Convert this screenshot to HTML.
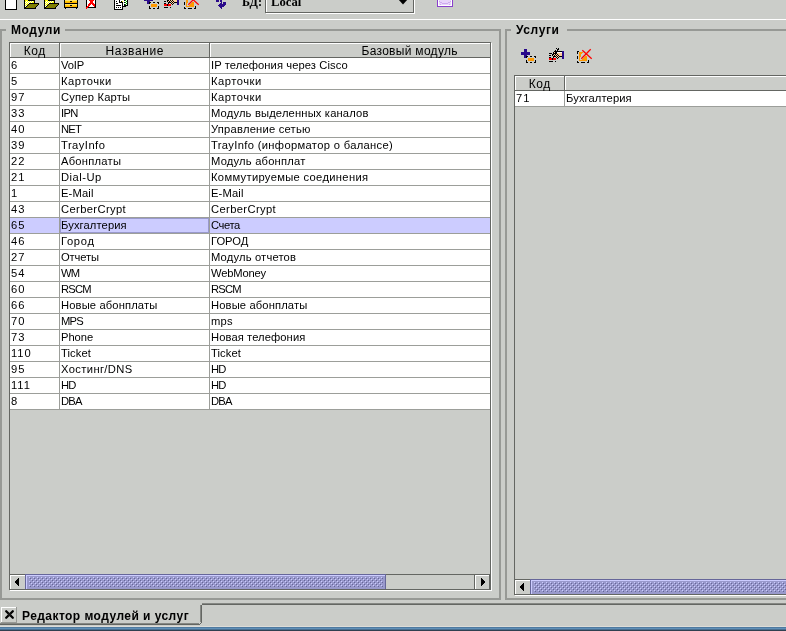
<!DOCTYPE html>
<html><head><meta charset="utf-8"><style>
html,body{margin:0;padding:0}
body{width:786px;height:631px;overflow:hidden;position:relative;background:#cbcdc9;font-family:"Liberation Sans",sans-serif;color:#000}
i{position:absolute;display:block}
b{position:absolute;white-space:nowrap;line-height:20px;font-weight:normal;will-change:transform}
svg{overflow:visible}
</style></head><body>
<i style="left:0px;top:19px;width:786px;height:1px;background:#ffffff"></i>
<svg style="position:absolute;left:0;top:0" width="786" height="19" shape-rendering="crispEdges"><rect x="5" y="-4" width="12" height="14" fill="#000"/><rect x="6" y="-4" width="10" height="13" fill="#fff"/><rect x="24" y="0" width="1" height="1" fill="#000000"/><rect x="25" y="0" width="3" height="1" fill="#ffff00"/><rect x="28" y="0" width="7" height="1" fill="#000000"/><rect x="24" y="1" width="1" height="1" fill="#000000"/><rect x="25" y="1" width="1" height="1" fill="#ffff00"/><rect x="26" y="1" width="1" height="1" fill="#ffffff"/><rect x="27" y="1" width="1" height="1" fill="#ffff00"/><rect x="28" y="1" width="1" height="1" fill="#ffffff"/><rect x="29" y="1" width="1" height="1" fill="#ffff00"/><rect x="30" y="1" width="1" height="1" fill="#ffffff"/><rect x="31" y="1" width="1" height="1" fill="#ffff00"/><rect x="32" y="1" width="1" height="1" fill="#ffffff"/><rect x="33" y="1" width="1" height="1" fill="#ffff00"/><rect x="34" y="1" width="1" height="1" fill="#000000"/><rect x="24" y="2" width="1" height="1" fill="#000000"/><rect x="25" y="2" width="1" height="1" fill="#ffffff"/><rect x="26" y="2" width="1" height="1" fill="#ffff00"/><rect x="27" y="2" width="1" height="1" fill="#ffffff"/><rect x="28" y="2" width="1" height="1" fill="#ffff00"/><rect x="29" y="2" width="1" height="1" fill="#ffffff"/><rect x="30" y="2" width="1" height="1" fill="#ffff00"/><rect x="31" y="2" width="1" height="1" fill="#ffffff"/><rect x="32" y="2" width="2" height="1" fill="#ffff00"/><rect x="34" y="2" width="1" height="1" fill="#000000"/><rect x="24" y="3" width="1" height="1" fill="#000000"/><rect x="25" y="3" width="1" height="1" fill="#ffff00"/><rect x="26" y="3" width="1" height="1" fill="#ffffff"/><rect x="27" y="3" width="1" height="1" fill="#ffff00"/><rect x="28" y="3" width="1" height="1" fill="#ffffff"/><rect x="29" y="3" width="10" height="1" fill="#000000"/><rect x="24" y="4" width="1" height="1" fill="#000000"/><rect x="25" y="4" width="1" height="1" fill="#ffffff"/><rect x="26" y="4" width="2" height="1" fill="#ffff00"/><rect x="28" y="4" width="1" height="1" fill="#000000"/><rect x="29" y="4" width="9" height="1" fill="#808000"/><rect x="38" y="4" width="1" height="1" fill="#000000"/><rect x="24" y="5" width="1" height="1" fill="#000000"/><rect x="25" y="5" width="1" height="1" fill="#ffff00"/><rect x="26" y="5" width="1" height="1" fill="#ffffff"/><rect x="27" y="5" width="1" height="1" fill="#000000"/><rect x="28" y="5" width="9" height="1" fill="#808000"/><rect x="37" y="5" width="1" height="1" fill="#000000"/><rect x="24" y="6" width="1" height="1" fill="#000000"/><rect x="25" y="6" width="1" height="1" fill="#ffffff"/><rect x="26" y="6" width="1" height="1" fill="#000000"/><rect x="27" y="6" width="9" height="1" fill="#808000"/><rect x="36" y="6" width="1" height="1" fill="#000000"/><rect x="24" y="7" width="2" height="1" fill="#000000"/><rect x="26" y="7" width="9" height="1" fill="#808000"/><rect x="35" y="7" width="1" height="1" fill="#000000"/><rect x="24" y="8" width="12" height="1" fill="#000000"/><rect x="44" y="0" width="1" height="1" fill="#000000"/><rect x="45" y="0" width="3" height="1" fill="#ffff00"/><rect x="48" y="0" width="7" height="1" fill="#000000"/><rect x="44" y="1" width="1" height="1" fill="#000000"/><rect x="45" y="1" width="1" height="1" fill="#ffff00"/><rect x="46" y="1" width="1" height="1" fill="#ffffff"/><rect x="47" y="1" width="1" height="1" fill="#ffff00"/><rect x="48" y="1" width="1" height="1" fill="#ffffff"/><rect x="49" y="1" width="1" height="1" fill="#ffff00"/><rect x="50" y="1" width="1" height="1" fill="#ffffff"/><rect x="51" y="1" width="1" height="1" fill="#ffff00"/><rect x="52" y="1" width="1" height="1" fill="#ffffff"/><rect x="53" y="1" width="1" height="1" fill="#ffff00"/><rect x="54" y="1" width="1" height="1" fill="#000000"/><rect x="44" y="2" width="1" height="1" fill="#000000"/><rect x="45" y="2" width="1" height="1" fill="#ffffff"/><rect x="46" y="2" width="1" height="1" fill="#ffff00"/><rect x="47" y="2" width="1" height="1" fill="#ffffff"/><rect x="48" y="2" width="1" height="1" fill="#ffff00"/><rect x="49" y="2" width="1" height="1" fill="#ffffff"/><rect x="50" y="2" width="1" height="1" fill="#ffff00"/><rect x="51" y="2" width="1" height="1" fill="#ffffff"/><rect x="52" y="2" width="2" height="1" fill="#ffff00"/><rect x="54" y="2" width="1" height="1" fill="#000000"/><rect x="44" y="3" width="1" height="1" fill="#000000"/><rect x="45" y="3" width="1" height="1" fill="#ffff00"/><rect x="46" y="3" width="1" height="1" fill="#ffffff"/><rect x="47" y="3" width="1" height="1" fill="#ffff00"/><rect x="48" y="3" width="1" height="1" fill="#ffffff"/><rect x="49" y="3" width="10" height="1" fill="#000000"/><rect x="44" y="4" width="1" height="1" fill="#000000"/><rect x="45" y="4" width="1" height="1" fill="#ffffff"/><rect x="46" y="4" width="2" height="1" fill="#ffff00"/><rect x="48" y="4" width="1" height="1" fill="#000000"/><rect x="49" y="4" width="9" height="1" fill="#808000"/><rect x="58" y="4" width="1" height="1" fill="#000000"/><rect x="44" y="5" width="1" height="1" fill="#000000"/><rect x="45" y="5" width="1" height="1" fill="#ffff00"/><rect x="46" y="5" width="1" height="1" fill="#ffffff"/><rect x="47" y="5" width="1" height="1" fill="#000000"/><rect x="48" y="5" width="9" height="1" fill="#808000"/><rect x="57" y="5" width="1" height="1" fill="#000000"/><rect x="44" y="6" width="1" height="1" fill="#000000"/><rect x="45" y="6" width="1" height="1" fill="#ffffff"/><rect x="46" y="6" width="1" height="1" fill="#000000"/><rect x="47" y="6" width="9" height="1" fill="#808000"/><rect x="56" y="6" width="1" height="1" fill="#000000"/><rect x="44" y="7" width="2" height="1" fill="#000000"/><rect x="46" y="7" width="9" height="1" fill="#808000"/><rect x="55" y="7" width="1" height="1" fill="#000000"/><rect x="44" y="8" width="12" height="1" fill="#000000"/><rect x="64" y="0" width="1" height="1" fill="#000000"/><rect x="65" y="0" width="12" height="1" fill="#ffe066"/><rect x="77" y="0" width="1" height="1" fill="#000000"/><rect x="64" y="1" width="1" height="1" fill="#000000"/><rect x="65" y="1" width="5" height="1" fill="#ffcc00"/><rect x="70" y="1" width="2" height="1" fill="#000000"/><rect x="72" y="1" width="5" height="1" fill="#ffcc00"/><rect x="77" y="1" width="1" height="1" fill="#000000"/><rect x="64" y="2" width="1" height="1" fill="#000000"/><rect x="65" y="2" width="12" height="1" fill="#ffb000"/><rect x="77" y="2" width="1" height="1" fill="#000000"/><rect x="64" y="3" width="14" height="1" fill="#000000"/><rect x="64" y="4" width="1" height="1" fill="#000000"/><rect x="65" y="4" width="12" height="1" fill="#ffe066"/><rect x="77" y="4" width="1" height="1" fill="#000000"/><rect x="64" y="5" width="1" height="1" fill="#000000"/><rect x="65" y="5" width="5" height="1" fill="#ffcc00"/><rect x="70" y="5" width="2" height="1" fill="#000000"/><rect x="72" y="5" width="5" height="1" fill="#ffcc00"/><rect x="77" y="5" width="1" height="1" fill="#000000"/><rect x="64" y="6" width="1" height="1" fill="#000000"/><rect x="65" y="6" width="12" height="1" fill="#ffb000"/><rect x="77" y="6" width="1" height="1" fill="#000000"/><rect x="64" y="7" width="14" height="1" fill="#000000"/><rect x="65" y="8" width="1" height="1" fill="#000000"/><rect x="76" y="8" width="1" height="1" fill="#000000"/><rect x="86" y="0" width="1" height="1" fill="#000000"/><rect x="87" y="0" width="2" height="1" fill="#ffffff"/><rect x="89" y="0" width="5" height="1" fill="#ff0000"/><rect x="94" y="0" width="1" height="1" fill="#ffffff"/><rect x="95" y="0" width="1" height="1" fill="#000000"/><rect x="86" y="1" width="1" height="1" fill="#000000"/><rect x="87" y="1" width="3" height="1" fill="#ffffff"/><rect x="90" y="1" width="3" height="1" fill="#ff0000"/><rect x="93" y="1" width="2" height="1" fill="#ffffff"/><rect x="95" y="1" width="1" height="1" fill="#000000"/><rect x="86" y="2" width="1" height="1" fill="#000000"/><rect x="87" y="2" width="3" height="1" fill="#ffffff"/><rect x="90" y="2" width="3" height="1" fill="#ff0000"/><rect x="93" y="2" width="2" height="1" fill="#ffffff"/><rect x="95" y="2" width="1" height="1" fill="#000000"/><rect x="86" y="3" width="1" height="1" fill="#000000"/><rect x="87" y="3" width="2" height="1" fill="#ffffff"/><rect x="89" y="3" width="5" height="1" fill="#ff0000"/><rect x="94" y="3" width="1" height="1" fill="#ffffff"/><rect x="95" y="3" width="1" height="1" fill="#000000"/><rect x="86" y="4" width="1" height="1" fill="#000000"/><rect x="87" y="4" width="1" height="1" fill="#ffffff"/><rect x="88" y="4" width="3" height="1" fill="#ff0000"/><rect x="91" y="4" width="1" height="1" fill="#ffffff"/><rect x="92" y="4" width="3" height="1" fill="#ff0000"/><rect x="95" y="4" width="1" height="1" fill="#000000"/><rect x="86" y="5" width="1" height="1" fill="#000000"/><rect x="87" y="5" width="1" height="1" fill="#ffffff"/><rect x="88" y="5" width="2" height="1" fill="#ff0000"/><rect x="90" y="5" width="3" height="1" fill="#ffffff"/><rect x="93" y="5" width="2" height="1" fill="#ff0000"/><rect x="95" y="5" width="1" height="1" fill="#000000"/><rect x="86" y="6" width="1" height="1" fill="#000000"/><rect x="87" y="6" width="2" height="1" fill="#ff0000"/><rect x="89" y="6" width="5" height="1" fill="#ffffff"/><rect x="94" y="6" width="1" height="1" fill="#ff0000"/><rect x="95" y="6" width="1" height="1" fill="#000000"/><rect x="86" y="7" width="2" height="1" fill="#ff0000"/><rect x="88" y="7" width="8" height="1" fill="#000000"/><rect x="86" y="8" width="1" height="1" fill="#ff0000"/><rect x="114" y="0" width="1" height="1" fill="#000000"/><rect x="115" y="0" width="4" height="1" fill="#ffffff"/><rect x="119" y="0" width="1" height="1" fill="#000000"/><rect x="120" y="0" width="4" height="1" fill="#ffffff"/><rect x="124" y="0" width="1" height="1" fill="#000000"/><rect x="125" y="0" width="1" height="1" fill="#00a000"/><rect x="126" y="0" width="1" height="1" fill="#ffffff"/><rect x="127" y="0" width="1" height="1" fill="#000000"/><rect x="114" y="1" width="1" height="1" fill="#000000"/><rect x="115" y="1" width="1" height="1" fill="#ffffff"/><rect x="116" y="1" width="1" height="1" fill="#000000"/><rect x="117" y="1" width="2" height="1" fill="#ffffff"/><rect x="119" y="1" width="1" height="1" fill="#000000"/><rect x="120" y="1" width="1" height="1" fill="#ffffff"/><rect x="121" y="1" width="1" height="1" fill="#000000"/><rect x="122" y="1" width="1" height="1" fill="#ffff00"/><rect x="123" y="1" width="3" height="1" fill="#ffffff"/><rect x="126" y="1" width="1" height="1" fill="#00a000"/><rect x="127" y="1" width="1" height="1" fill="#000000"/><rect x="114" y="2" width="1" height="1" fill="#000000"/><rect x="115" y="2" width="4" height="1" fill="#ffffff"/><rect x="119" y="2" width="4" height="1" fill="#000000"/><rect x="123" y="2" width="1" height="1" fill="#ffffff"/><rect x="124" y="2" width="1" height="1" fill="#000000"/><rect x="125" y="2" width="1" height="1" fill="#00a000"/><rect x="126" y="2" width="1" height="1" fill="#ffffff"/><rect x="127" y="2" width="1" height="1" fill="#000000"/><rect x="114" y="3" width="1" height="1" fill="#000000"/><rect x="115" y="3" width="1" height="1" fill="#ffffff"/><rect x="116" y="3" width="2" height="1" fill="#000000"/><rect x="118" y="3" width="4" height="1" fill="#ffffff"/><rect x="122" y="3" width="1" height="1" fill="#000000"/><rect x="123" y="3" width="3" height="1" fill="#ffffff"/><rect x="126" y="3" width="1" height="1" fill="#00a000"/><rect x="127" y="3" width="1" height="1" fill="#000000"/><rect x="114" y="4" width="1" height="1" fill="#000000"/><rect x="115" y="4" width="7" height="1" fill="#ffffff"/><rect x="122" y="4" width="1" height="1" fill="#000000"/><rect x="123" y="4" width="1" height="1" fill="#ffffff"/><rect x="124" y="4" width="1" height="1" fill="#000000"/><rect x="125" y="4" width="1" height="1" fill="#00a000"/><rect x="126" y="4" width="1" height="1" fill="#ffffff"/><rect x="127" y="4" width="1" height="1" fill="#000000"/><rect x="114" y="5" width="1" height="1" fill="#000000"/><rect x="115" y="5" width="1" height="1" fill="#ffffff"/><rect x="116" y="5" width="5" height="1" fill="#000000"/><rect x="121" y="5" width="1" height="1" fill="#ffffff"/><rect x="122" y="5" width="1" height="1" fill="#000000"/><rect x="123" y="5" width="1" height="1" fill="#ffffff"/><rect x="124" y="5" width="4" height="1" fill="#000000"/><rect x="114" y="6" width="1" height="1" fill="#000000"/><rect x="115" y="6" width="7" height="1" fill="#ffffff"/><rect x="122" y="6" width="4" height="1" fill="#000000"/><rect x="114" y="7" width="1" height="1" fill="#000000"/><rect x="115" y="7" width="1" height="1" fill="#ffffff"/><rect x="116" y="7" width="1" height="1" fill="#000000"/><rect x="117" y="7" width="1" height="1" fill="#ffffff"/><rect x="118" y="7" width="1" height="1" fill="#000000"/><rect x="119" y="7" width="1" height="1" fill="#ffffff"/><rect x="120" y="7" width="1" height="1" fill="#000000"/><rect x="121" y="7" width="1" height="1" fill="#ffffff"/><rect x="122" y="7" width="1" height="1" fill="#000000"/><rect x="114" y="8" width="1" height="1" fill="#000000"/><rect x="115" y="8" width="7" height="1" fill="#ffffff"/><rect x="122" y="8" width="1" height="1" fill="#000000"/><rect x="114" y="9" width="9" height="1" fill="#000000"/><use href="#ico-add" x="-377" y="-54"/><use href="#ico-edit" x="-385" y="-54"/><use href="#ico-del" x="-393" y="-54"/><rect x="216" y="0" width="3" height="1" fill="#2a0a8a"/><rect x="220" y="0" width="2" height="1" fill="#2a0a8a"/><rect x="216" y="1" width="3" height="1" fill="#2a0a8a"/><rect x="220" y="1" width="2" height="1" fill="#2a0a8a"/><rect x="221" y="2" width="1" height="1" fill="#2a0a8a"/><rect x="223" y="2" width="3" height="1" fill="#2a0a8a"/><rect x="220" y="3" width="2" height="1" fill="#2a0a8a"/><rect x="223" y="3" width="3" height="1" fill="#2a0a8a"/><rect x="219" y="4" width="7" height="1" fill="#2a0a8a"/><rect x="218" y="5" width="7" height="1" fill="#2a0a8a"/><rect x="219" y="6" width="5" height="1" fill="#2a0a8a"/><rect x="220" y="7" width="2" height="1" fill="#2a0a8a"/><rect x="221" y="8" width="1" height="1" fill="#2a0a8a"/><rect x="437" y="0" width="1" height="1" fill="#8a3fcc"/><rect x="438" y="0" width="1" height="1" fill="#ffffff"/><rect x="439" y="0" width="12" height="1" fill="#e8d4fa"/><rect x="451" y="0" width="1" height="1" fill="#ffffff"/><rect x="452" y="0" width="1" height="1" fill="#8a3fcc"/><rect x="437" y="1" width="1" height="1" fill="#8a3fcc"/><rect x="438" y="1" width="1" height="1" fill="#ffffff"/><rect x="439" y="1" width="1" height="1" fill="#cfa8f0"/><rect x="440" y="1" width="10" height="1" fill="#e8d4fa"/><rect x="450" y="1" width="1" height="1" fill="#cfa8f0"/><rect x="451" y="1" width="1" height="1" fill="#ffffff"/><rect x="452" y="1" width="1" height="1" fill="#8a3fcc"/><rect x="437" y="2" width="1" height="1" fill="#8a3fcc"/><rect x="438" y="2" width="1" height="1" fill="#ffffff"/><rect x="439" y="2" width="1" height="1" fill="#e8d4fa"/><rect x="440" y="2" width="2" height="1" fill="#cfa8f0"/><rect x="442" y="2" width="6" height="1" fill="#e8d4fa"/><rect x="448" y="2" width="2" height="1" fill="#cfa8f0"/><rect x="450" y="2" width="1" height="1" fill="#e8d4fa"/><rect x="451" y="2" width="1" height="1" fill="#ffffff"/><rect x="452" y="2" width="1" height="1" fill="#8a3fcc"/><rect x="437" y="3" width="1" height="1" fill="#8a3fcc"/><rect x="438" y="3" width="1" height="1" fill="#ffffff"/><rect x="439" y="3" width="3" height="1" fill="#e8d4fa"/><rect x="442" y="3" width="6" height="1" fill="#cfa8f0"/><rect x="448" y="3" width="3" height="1" fill="#e8d4fa"/><rect x="451" y="3" width="1" height="1" fill="#ffffff"/><rect x="452" y="3" width="1" height="1" fill="#8a3fcc"/><rect x="437" y="4" width="1" height="1" fill="#8a3fcc"/><rect x="438" y="4" width="1" height="1" fill="#ffffff"/><rect x="439" y="4" width="1" height="1" fill="#e8d4fa"/><rect x="440" y="4" width="1" height="1" fill="#cfa8f0"/><rect x="441" y="4" width="8" height="1" fill="#e8d4fa"/><rect x="449" y="4" width="1" height="1" fill="#cfa8f0"/><rect x="450" y="4" width="1" height="1" fill="#e8d4fa"/><rect x="451" y="4" width="1" height="1" fill="#ffffff"/><rect x="452" y="4" width="1" height="1" fill="#8a3fcc"/><rect x="437" y="5" width="1" height="1" fill="#8a3fcc"/><rect x="438" y="5" width="14" height="1" fill="#ffffff"/><rect x="452" y="5" width="1" height="1" fill="#8a3fcc"/><rect x="437" y="6" width="16" height="1" fill="#8a3fcc"/></svg>
<b style="left:242px;top:-8.23px;font-size:12.2px;font-weight:bold;font-family:'Liberation Serif',serif;">БД:</b>
<i style="left:265px;top:-2px;width:1px;height:15px;background:#646662"></i>
<i style="left:266px;top:-2px;width:1px;height:14px;background:#ffffff"></i>
<i style="left:265px;top:12px;width:149px;height:1px;background:#646662"></i>
<i style="left:413px;top:-2px;width:1px;height:15px;background:#646662"></i>
<i style="left:266px;top:13px;width:149px;height:1px;background:#ffffff"></i>
<i style="left:414px;top:-2px;width:1px;height:16px;background:#ffffff"></i>
<b style="left:271px;top:-8.40px;font-size:12.7px;font-weight:bold;font-family:'Liberation Serif',serif;">Local</b>
<svg style="position:absolute;left:396px;top:0" width="14" height="8"><polygon points="2,-1 12,-1 7,4.5" fill="#000"/></svg>
<i style="left:0px;top:29px;width:501px;height:2px;background:#979995"></i>
<i style="left:0px;top:29px;width:2px;height:571px;background:#979995"></i>
<i style="left:499px;top:29px;width:2px;height:571px;background:#979995"></i>
<i style="left:0px;top:598px;width:501px;height:2px;background:#979995"></i>
<i style="left:6px;top:24px;width:59px;height:12px;background:#cbcdc9"></i>
<b style="left:11px;top:19.84px;font-size:12px;font-weight:bold;letter-spacing:0.6px;">Модули</b>
<i style="left:505px;top:29px;width:281px;height:2px;background:#979995"></i>
<i style="left:505px;top:29px;width:2px;height:571px;background:#979995"></i>
<i style="left:505px;top:598px;width:281px;height:2px;background:#979995"></i>
<i style="left:511px;top:24px;width:56px;height:12px;background:#cbcdc9"></i>
<b style="left:516px;top:19.84px;font-size:12px;font-weight:bold;letter-spacing:0.6px;">Услуги</b>
<i style="left:9px;top:42px;width:482px;height:1px;background:#646662"></i>
<i style="left:9px;top:42px;width:1px;height:548px;background:#646662"></i>
<i style="left:490px;top:42px;width:1px;height:548px;background:#646662"></i>
<i style="left:9px;top:589px;width:482px;height:1px;background:#646662"></i>
<i style="left:491px;top:43px;width:1px;height:548px;background:#ffffff"></i>
<i style="left:10px;top:590px;width:482px;height:1px;background:#ffffff"></i>
<i style="left:10px;top:43px;width:480px;height:1px;background:#ffffff"></i>
<i style="left:10px;top:57px;width:480px;height:1px;background:#646662"></i>
<i style="left:10px;top:43px;width:1px;height:14px;background:#ffffff"></i>
<i style="left:59px;top:43px;width:1px;height:15px;background:#646662"></i>
<i style="left:60px;top:43px;width:1px;height:14px;background:#ffffff"></i>
<i style="left:209px;top:43px;width:1px;height:15px;background:#646662"></i>
<i style="left:210px;top:43px;width:1px;height:14px;background:#ffffff"></i>
<b style="left:10px;width:49px;text-align:center;top:40.84px;font-size:12px;font-weight:normal;letter-spacing:0.6px;text-indent:0.6px;">Код</b>
<b style="left:60px;width:149px;text-align:center;top:40.84px;font-size:12px;font-weight:normal;letter-spacing:0.6px;text-indent:0.6px;">Название</b>
<b style="left:210px;width:399px;text-align:center;top:40.84px;font-size:12px;font-weight:normal;letter-spacing:0.3px;text-indent:0.3px;">Базовый модуль</b>
<i style="left:10px;top:58px;width:480px;height:352px;background:#ffffff"></i>
<i style="left:10px;top:218px;width:480px;height:15px;background:#ccccff"></i>
<i style="left:60px;top:218px;width:149px;height:1px;background:#9999cc"></i>
<i style="left:60px;top:232px;width:149px;height:1px;background:#9999cc"></i>
<i style="left:60px;top:218px;width:1px;height:15px;background:#9999cc"></i>
<i style="left:208px;top:218px;width:1px;height:15px;background:#9999cc"></i>
<i style="left:10px;top:73px;width:480px;height:1px;background:#9c9e9a"></i>
<i style="left:10px;top:89px;width:480px;height:1px;background:#9c9e9a"></i>
<i style="left:10px;top:105px;width:480px;height:1px;background:#9c9e9a"></i>
<i style="left:10px;top:121px;width:480px;height:1px;background:#9c9e9a"></i>
<i style="left:10px;top:137px;width:480px;height:1px;background:#9c9e9a"></i>
<i style="left:10px;top:153px;width:480px;height:1px;background:#9c9e9a"></i>
<i style="left:10px;top:169px;width:480px;height:1px;background:#9c9e9a"></i>
<i style="left:10px;top:185px;width:480px;height:1px;background:#9c9e9a"></i>
<i style="left:10px;top:201px;width:480px;height:1px;background:#9c9e9a"></i>
<i style="left:10px;top:217px;width:480px;height:1px;background:#9c9e9a"></i>
<i style="left:10px;top:233px;width:480px;height:1px;background:#9c9e9a"></i>
<i style="left:10px;top:249px;width:480px;height:1px;background:#9c9e9a"></i>
<i style="left:10px;top:265px;width:480px;height:1px;background:#9c9e9a"></i>
<i style="left:10px;top:281px;width:480px;height:1px;background:#9c9e9a"></i>
<i style="left:10px;top:297px;width:480px;height:1px;background:#9c9e9a"></i>
<i style="left:10px;top:313px;width:480px;height:1px;background:#9c9e9a"></i>
<i style="left:10px;top:329px;width:480px;height:1px;background:#9c9e9a"></i>
<i style="left:10px;top:345px;width:480px;height:1px;background:#9c9e9a"></i>
<i style="left:10px;top:361px;width:480px;height:1px;background:#9c9e9a"></i>
<i style="left:10px;top:377px;width:480px;height:1px;background:#9c9e9a"></i>
<i style="left:10px;top:393px;width:480px;height:1px;background:#9c9e9a"></i>
<i style="left:10px;top:409px;width:480px;height:1px;background:#9c9e9a"></i>
<i style="left:59px;top:58px;width:1px;height:352px;background:#9c9e9a"></i>
<i style="left:209px;top:58px;width:1px;height:352px;background:#9c9e9a"></i>
<b style="left:11px;top:55.12px;font-size:11.2px;letter-spacing:0.95px;">6</b>
<b style="left:61px;top:55.12px;font-size:11.2px;letter-spacing:-0.12px;">VoIP</b>
<b style="left:211px;top:55.12px;font-size:11.2px;letter-spacing:0.09px;">IP телефония через Cisco</b>
<b style="left:11px;top:71.12px;font-size:11.2px;letter-spacing:0.95px;">5</b>
<b style="left:61px;top:71.12px;font-size:11.2px;letter-spacing:0.5px;">Карточки</b>
<b style="left:211px;top:71.12px;font-size:11.2px;letter-spacing:0.5px;">Карточки</b>
<b style="left:11px;top:87.12px;font-size:11.2px;letter-spacing:0.95px;">97</b>
<b style="left:61px;top:87.12px;font-size:11.2px;letter-spacing:0.2px;">Супер Карты</b>
<b style="left:211px;top:87.12px;font-size:11.2px;letter-spacing:0.5px;">Карточки</b>
<b style="left:11px;top:103.12px;font-size:11.2px;letter-spacing:0.95px;">33</b>
<b style="left:61px;top:103.12px;font-size:11.2px;letter-spacing:-0.64px;">IPN</b>
<b style="left:211px;top:103.12px;font-size:11.2px;letter-spacing:0.16px;">Модуль выделенных каналов</b>
<b style="left:11px;top:119.12px;font-size:11.2px;letter-spacing:0.95px;">40</b>
<b style="left:61px;top:119.12px;font-size:11.2px;letter-spacing:-0.8px;">NET</b>
<b style="left:211px;top:119.12px;font-size:11.2px;letter-spacing:0.22px;">Управление сетью</b>
<b style="left:11px;top:135.12px;font-size:11.2px;letter-spacing:0.95px;">39</b>
<b style="left:61px;top:135.12px;font-size:11.2px;letter-spacing:0.47px;">TrayInfo</b>
<b style="left:211px;top:135.12px;font-size:11.2px;letter-spacing:0.33px;">TrayInfo (информатор о балансе)</b>
<b style="left:11px;top:151.12px;font-size:11.2px;letter-spacing:0.95px;">22</b>
<b style="left:61px;top:151.12px;font-size:11.2px;letter-spacing:0.24px;">Абонплаты</b>
<b style="left:211px;top:151.12px;font-size:11.2px;letter-spacing:0.2px;">Модуль абонплат</b>
<b style="left:11px;top:167.12px;font-size:11.2px;letter-spacing:0.95px;">21</b>
<b style="left:61px;top:167.12px;font-size:11.2px;letter-spacing:0.49px;">Dial-Up</b>
<b style="left:211px;top:167.12px;font-size:11.2px;letter-spacing:0.32px;">Коммутируемые соединения</b>
<b style="left:11px;top:183.12px;font-size:11.2px;letter-spacing:0.95px;">1</b>
<b style="left:61px;top:183.12px;font-size:11.2px;letter-spacing:0.16px;">E-Mail</b>
<b style="left:211px;top:183.12px;font-size:11.2px;letter-spacing:0.16px;">E-Mail</b>
<b style="left:11px;top:199.12px;font-size:11.2px;letter-spacing:0.95px;">43</b>
<b style="left:61px;top:199.12px;font-size:11.2px;letter-spacing:0.38px;">CerberCrypt</b>
<b style="left:211px;top:199.12px;font-size:11.2px;letter-spacing:0.38px;">CerberCrypt</b>
<b style="left:11px;top:215.12px;font-size:11.2px;letter-spacing:0.95px;">65</b>
<b style="left:61px;top:215.12px;font-size:11.2px;letter-spacing:0.1px;">Бухгалтерия</b>
<b style="left:211px;top:215.12px;font-size:11.2px;letter-spacing:-0.41px;">Счета</b>
<b style="left:11px;top:231.12px;font-size:11.2px;letter-spacing:0.95px;">46</b>
<b style="left:61px;top:231.12px;font-size:11.2px;letter-spacing:0.67px;">Город</b>
<b style="left:211px;top:231.12px;font-size:11.2px;letter-spacing:-0.03px;">ГОРОД</b>
<b style="left:11px;top:247.12px;font-size:11.2px;letter-spacing:0.95px;">27</b>
<b style="left:61px;top:247.12px;font-size:11.2px;letter-spacing:-0.13px;">Отчеты</b>
<b style="left:211px;top:247.12px;font-size:11.2px;letter-spacing:0.17px;">Модуль отчетов</b>
<b style="left:11px;top:263.12px;font-size:11.2px;letter-spacing:0.95px;">54</b>
<b style="left:61px;top:263.12px;font-size:11.2px;letter-spacing:-0.8px;">WM</b>
<b style="left:211px;top:263.12px;font-size:11.2px;letter-spacing:-0.17px;">WebMoney</b>
<b style="left:11px;top:279.12px;font-size:11.2px;letter-spacing:0.95px;">60</b>
<b style="left:61px;top:279.12px;font-size:11.2px;letter-spacing:-0.8px;">RSCM</b>
<b style="left:211px;top:279.12px;font-size:11.2px;letter-spacing:-0.8px;">RSCM</b>
<b style="left:11px;top:295.12px;font-size:11.2px;letter-spacing:0.95px;">66</b>
<b style="left:61px;top:295.12px;font-size:11.2px;letter-spacing:0.13px;">Новые абонплаты</b>
<b style="left:211px;top:295.12px;font-size:11.2px;letter-spacing:0.13px;">Новые абонплаты</b>
<b style="left:11px;top:311.12px;font-size:11.2px;letter-spacing:0.95px;">70</b>
<b style="left:61px;top:311.12px;font-size:11.2px;letter-spacing:-0.8px;">MPS</b>
<b style="left:211px;top:311.12px;font-size:11.2px;letter-spacing:0.23px;">mps</b>
<b style="left:11px;top:327.12px;font-size:11.2px;letter-spacing:0.95px;">73</b>
<b style="left:61px;top:327.12px;font-size:11.2px;letter-spacing:-0.03px;">Phone</b>
<b style="left:211px;top:327.12px;font-size:11.2px;letter-spacing:0.09px;">Новая телефония</b>
<b style="left:11px;top:343.12px;font-size:11.2px;letter-spacing:0.95px;">110</b>
<b style="left:61px;top:343.12px;font-size:11.2px;letter-spacing:0.1px;">Ticket</b>
<b style="left:211px;top:343.12px;font-size:11.2px;letter-spacing:0.1px;">Ticket</b>
<b style="left:11px;top:359.12px;font-size:11.2px;letter-spacing:0.95px;">95</b>
<b style="left:61px;top:359.12px;font-size:11.2px;letter-spacing:0.37px;">Хостинг/DNS</b>
<b style="left:211px;top:359.12px;font-size:11.2px;letter-spacing:-0.8px;">HD</b>
<b style="left:11px;top:375.12px;font-size:11.2px;letter-spacing:0.95px;">111</b>
<b style="left:61px;top:375.12px;font-size:11.2px;letter-spacing:-0.8px;">HD</b>
<b style="left:211px;top:375.12px;font-size:11.2px;letter-spacing:-0.8px;">HD</b>
<b style="left:11px;top:391.12px;font-size:11.2px;letter-spacing:0.95px;">8</b>
<b style="left:61px;top:391.12px;font-size:11.2px;letter-spacing:-0.8px;">DBA</b>
<b style="left:211px;top:391.12px;font-size:11.2px;letter-spacing:-0.8px;">DBA</b>
<i style="left:10px;top:574px;width:480px;height:1px;background:#646662"></i>
<i style="left:10px;top:575px;width:15px;height:1px;background:#ffffff"></i>
<i style="left:10px;top:575px;width:1px;height:14px;background:#ffffff"></i>
<i style="left:25px;top:574px;width:361px;height:1px;background:#666699"></i>
<i style="left:25px;top:574px;width:1px;height:15px;background:#666699"></i>
<i style="left:385px;top:574px;width:1px;height:15px;background:#666699"></i>
<i style="left:26px;top:575px;width:359px;height:1px;background:#ccccff"></i>
<i style="left:26px;top:575px;width:1px;height:14px;background:#ccccff"></i>
<i style="left:27px;top:576px;width:358px;height:13px;background:#9999cc"></i>
<svg style="position:absolute;left:27px;top:576px" width="356" height="11" shape-rendering="crispEdges"><defs><pattern id="bp1" patternUnits="userSpaceOnUse" x="2" y="1" width="4" height="4"><rect x="0" y="0" width="1" height="1" fill="#ccccff"/><rect x="2" y="2" width="1" height="1" fill="#ccccff"/><rect x="1" y="1" width="1" height="1" fill="#666699"/><rect x="3" y="3" width="1" height="1" fill="#666699"/></pattern></defs><rect x="2" y="1" width="354" height="10" fill="url(#bp1)"/></svg>
<i style="left:474px;top:575px;width:1px;height:14px;background:#646662"></i>
<i style="left:475px;top:575px;width:1px;height:14px;background:#ffffff"></i>
<i style="left:475px;top:575px;width:14px;height:1px;background:#ffffff"></i>
<i style="left:489px;top:574px;width:1px;height:15px;background:#646662"></i>
<svg style="position:absolute;left:0;top:570px" width="786" height="30" shape-rendering="crispEdges"><rect x="15" y="11" width="1" height="2" fill="#000"/><rect x="16" y="10" width="1" height="4" fill="#000"/><rect x="17" y="9" width="1" height="6" fill="#000"/><rect x="18" y="8" width="1" height="8" fill="#000"/><rect x="481" y="8" width="1" height="8" fill="#000"/><rect x="482" y="9" width="1" height="6" fill="#000"/><rect x="483" y="10" width="1" height="4" fill="#000"/><rect x="484" y="11" width="1" height="2" fill="#000"/><rect x="520" y="16" width="1" height="2" fill="#000"/><rect x="521" y="15" width="1" height="4" fill="#000"/><rect x="522" y="14" width="1" height="6" fill="#000"/><rect x="523" y="13" width="1" height="8" fill="#000"/></svg>
<svg style="position:absolute;left:0;top:0" width="786" height="70" shape-rendering="crispEdges"><defs><g id="ico-add"><rect x="524" y="49" width="3" height="9" fill="#2a0a8a"/><rect x="521" y="52" width="9" height="3" fill="#2a0a8a"/><rect x="526" y="56" width="2" height="1" fill="#000000"/><rect x="530" y="56" width="2" height="1" fill="#000000"/><rect x="534" y="56" width="2" height="1" fill="#000000"/><rect x="526" y="57" width="1" height="1" fill="#000000"/><rect x="535" y="57" width="1" height="1" fill="#000000"/><rect x="528" y="58" width="6" height="1" fill="#ff9900"/><rect x="528" y="59" width="6" height="1" fill="#ff9900"/><rect x="526" y="60" width="1" height="1" fill="#000000"/><rect x="528" y="60" width="6" height="1" fill="#ff9900"/><rect x="535" y="60" width="1" height="1" fill="#000000"/><rect x="526" y="61" width="1" height="1" fill="#000000"/><rect x="535" y="61" width="1" height="1" fill="#000000"/><rect x="526" y="62" width="2" height="1" fill="#000000"/><rect x="530" y="62" width="2" height="1" fill="#000000"/><rect x="534" y="62" width="2" height="1" fill="#000000"/></g><g id="ico-edit"><rect x="556" y="48" width="1" height="1" fill="#000000"/><rect x="558" y="48" width="1" height="1" fill="#000000"/><rect x="557" y="49" width="2" height="1" fill="#000000"/><rect x="555" y="50" width="1" height="1" fill="#000000"/><rect x="557" y="50" width="1" height="1" fill="#000000"/><rect x="554" y="51" width="8" height="1" fill="#000000"/><rect x="562" y="51" width="2" height="1" fill="#2a0a8a"/><rect x="553" y="52" width="1" height="1" fill="#000000"/><rect x="554" y="52" width="1" height="1" fill="#ffcc99"/><rect x="555" y="52" width="2" height="1" fill="#000000"/><rect x="557" y="52" width="5" height="1" fill="#ffffff"/><rect x="562" y="52" width="2" height="1" fill="#2a0a8a"/><rect x="549" y="53" width="3" height="1" fill="#000000"/><rect x="553" y="53" width="4" height="1" fill="#000000"/><rect x="557" y="53" width="5" height="1" fill="#ffcc99"/><rect x="562" y="53" width="2" height="1" fill="#2a0a8a"/><rect x="552" y="54" width="2" height="1" fill="#000000"/><rect x="554" y="54" width="1" height="1" fill="#ffcc99"/><rect x="555" y="54" width="1" height="1" fill="#000000"/><rect x="556" y="54" width="1" height="1" fill="#ffcc99"/><rect x="557" y="54" width="1" height="1" fill="#000000"/><rect x="558" y="54" width="4" height="1" fill="#ffcc99"/><rect x="562" y="54" width="2" height="1" fill="#2a0a8a"/><rect x="549" y="55" width="2" height="1" fill="#000000"/><rect x="552" y="55" width="1" height="1" fill="#000000"/><rect x="553" y="55" width="1" height="1" fill="#ffcc99"/><rect x="554" y="55" width="1" height="1" fill="#000000"/><rect x="555" y="55" width="1" height="1" fill="#ffcc99"/><rect x="556" y="55" width="1" height="1" fill="#000000"/><rect x="557" y="55" width="1" height="1" fill="#ffcc99"/><rect x="558" y="55" width="1" height="1" fill="#000000"/><rect x="559" y="55" width="3" height="1" fill="#ffcc99"/><rect x="562" y="55" width="2" height="1" fill="#2a0a8a"/><rect x="553" y="56" width="3" height="1" fill="#000000"/><rect x="556" y="56" width="1" height="1" fill="#ffcc99"/><rect x="557" y="56" width="1" height="1" fill="#000000"/><rect x="558" y="56" width="1" height="1" fill="#ffcc99"/><rect x="559" y="56" width="3" height="1" fill="#000000"/><rect x="562" y="56" width="2" height="1" fill="#2a0a8a"/><rect x="549" y="57" width="2" height="1" fill="#000000"/><rect x="553" y="57" width="1" height="1" fill="#000000"/><rect x="556" y="57" width="1" height="1" fill="#000000"/><rect x="557" y="57" width="1" height="1" fill="#ffcc99"/><rect x="558" y="57" width="1" height="1" fill="#000000"/><rect x="562" y="57" width="2" height="1" fill="#2a0a8a"/><rect x="549" y="58" width="3" height="1" fill="#ff0000"/><rect x="552" y="58" width="1" height="1" fill="#000000"/><rect x="553" y="58" width="3" height="1" fill="#ff0000"/><rect x="557" y="58" width="1" height="1" fill="#000000"/><rect x="562" y="58" width="2" height="1" fill="#2a0a8a"/><rect x="549" y="59" width="3" height="1" fill="#ff0000"/><rect x="552" y="59" width="1" height="1" fill="#000000"/><rect x="553" y="59" width="3" height="1" fill="#ff0000"/><rect x="549" y="61" width="4" height="1" fill="#000000"/><rect x="555" y="61" width="1" height="1" fill="#000000"/></g><g id="ico-del"><rect x="577" y="51" width="2" height="1" fill="#000000"/><rect x="577" y="52" width="1" height="1" fill="#000000"/><rect x="579" y="52" width="4" height="1" fill="#ff9900"/><rect x="577" y="53" width="1" height="1" fill="#000000"/><rect x="579" y="53" width="3" height="1" fill="#ff9900"/><rect x="579" y="54" width="2" height="1" fill="#ff9900"/><rect x="579" y="55" width="2" height="1" fill="#ff9900"/><rect x="577" y="56" width="1" height="1" fill="#000000"/><rect x="579" y="56" width="2" height="1" fill="#ff9900"/><rect x="585" y="56" width="2" height="1" fill="#ff9900"/><rect x="577" y="57" width="1" height="1" fill="#000000"/><rect x="579" y="57" width="1" height="1" fill="#ff9900"/><rect x="584" y="57" width="3" height="1" fill="#ff9900"/><rect x="577" y="58" width="1" height="1" fill="#000000"/><rect x="579" y="58" width="1" height="1" fill="#ff9900"/><rect x="583" y="58" width="4" height="1" fill="#ff9900"/><rect x="579" y="59" width="1" height="1" fill="#ff9900"/><rect x="582" y="59" width="5" height="1" fill="#ff9900"/><rect x="579" y="60" width="8" height="1" fill="#ff9900"/><rect x="588" y="60" width="1" height="1" fill="#000000"/><rect x="577" y="61" width="1" height="1" fill="#000000"/><rect x="588" y="61" width="1" height="1" fill="#000000"/><rect x="577" y="62" width="2" height="1" fill="#000000"/><rect x="581" y="62" width="4" height="1" fill="#000000"/><rect x="587" y="62" width="2" height="1" fill="#000000"/><g shape-rendering="auto"><line x1="582.3" y1="50.3" x2="591.7" y2="58.7" stroke="#ff0000" stroke-width="1.25"/><line x1="590.7" y1="49.3" x2="581.3" y2="58.7" stroke="#ff0000" stroke-width="1.25"/></g></g></defs><use href="#ico-add"/><use href="#ico-edit"/><use href="#ico-del"/></svg>
<i style="left:514px;top:75px;width:272px;height:1px;background:#646662"></i>
<i style="left:514px;top:75px;width:1px;height:520px;background:#646662"></i>
<i style="left:514px;top:594px;width:272px;height:1px;background:#646662"></i>
<i style="left:515px;top:595px;width:271px;height:1px;background:#ffffff"></i>
<i style="left:515px;top:76px;width:271px;height:1px;background:#ffffff"></i>
<i style="left:515px;top:90px;width:271px;height:1px;background:#646662"></i>
<i style="left:515px;top:76px;width:1px;height:14px;background:#ffffff"></i>
<i style="left:564px;top:76px;width:1px;height:15px;background:#646662"></i>
<i style="left:565px;top:76px;width:1px;height:14px;background:#ffffff"></i>
<b style="left:515px;width:49px;text-align:center;top:73.84px;font-size:12px;font-weight:normal;letter-spacing:0.6px;text-indent:0.6px;">Код</b>
<i style="left:515px;top:91px;width:271px;height:15px;background:#ffffff"></i>
<i style="left:515px;top:106px;width:271px;height:1px;background:#9c9e9a"></i>
<i style="left:564px;top:91px;width:1px;height:16px;background:#9c9e9a"></i>
<b style="left:516px;top:88.12px;font-size:11.2px;letter-spacing:0.95px;">71</b>
<b style="left:566px;top:88.12px;font-size:11.2px;letter-spacing:0.1px;">Бухгалтерия</b>
<i style="left:515px;top:579px;width:271px;height:1px;background:#646662"></i>
<i style="left:515px;top:580px;width:15px;height:1px;background:#ffffff"></i>
<i style="left:515px;top:580px;width:1px;height:14px;background:#ffffff"></i>
<i style="left:530px;top:579px;width:270px;height:1px;background:#666699"></i>
<i style="left:530px;top:579px;width:1px;height:15px;background:#666699"></i>
<i style="left:531px;top:580px;width:268px;height:1px;background:#ccccff"></i>
<i style="left:531px;top:580px;width:1px;height:14px;background:#ccccff"></i>
<i style="left:532px;top:581px;width:267px;height:13px;background:#9999cc"></i>
<svg style="position:absolute;left:532px;top:581px" width="265" height="11" shape-rendering="crispEdges"><defs><pattern id="bp2" patternUnits="userSpaceOnUse" x="2" y="1" width="4" height="4"><rect x="0" y="0" width="1" height="1" fill="#ccccff"/><rect x="2" y="2" width="1" height="1" fill="#ccccff"/><rect x="1" y="1" width="1" height="1" fill="#666699"/><rect x="3" y="3" width="1" height="1" fill="#666699"/></pattern></defs><rect x="2" y="1" width="263" height="10" fill="url(#bp2)"/></svg>
<i style="left:202px;top:603px;width:584px;height:1px;background:#858783"></i>
<i style="left:200px;top:605px;width:1px;height:17px;background:#858783"></i>
<i style="left:0px;top:623px;width:199px;height:1px;background:#858783"></i>
<i style="left:202px;top:604px;width:584px;height:1px;background:#646662"></i>
<i style="left:201px;top:605px;width:1px;height:18px;background:#646662"></i>
<i style="left:200px;top:623px;width:1px;height:1px;background:#646662"></i>
<i style="left:0px;top:624px;width:200px;height:1px;background:#646662"></i>
<i style="left:0px;top:626px;width:786px;height:1px;background:#dcdcd8"></i>
<i style="left:0px;top:627px;width:786px;height:1px;background:#4f7aa0"></i>
<i style="left:0px;top:628px;width:786px;height:1px;background:#6090b8"></i>
<i style="left:0px;top:629px;width:786px;height:1px;background:#4a6e90"></i>
<i style="left:0px;top:630px;width:786px;height:1px;background:#2f4050"></i>
<i style="left:1px;top:607px;width:16px;height:1px;background:#ffffff"></i>
<i style="left:1px;top:607px;width:1px;height:16px;background:#ffffff"></i>
<i style="left:16px;top:607px;width:1px;height:16px;background:#979995"></i>
<i style="left:1px;top:622px;width:16px;height:1px;background:#979995"></i>
<svg style="position:absolute;left:0;top:600px" width="20" height="24"><path d="M6.2 11.2 L12.8 17.8 M12.8 11.2 L6.2 17.8" stroke="#000" stroke-width="2.3" stroke-linecap="round"/><rect x="8" y="13" width="3" height="3" fill="#111"/></svg>
<b style="left:22px;top:605.84px;font-size:12px;font-weight:bold;letter-spacing:0.45px;">Редактор модулей и услуг</b>
</body></html>
